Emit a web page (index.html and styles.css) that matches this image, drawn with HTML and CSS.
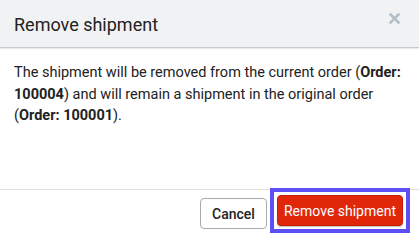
FILE: index.html
```html
<!DOCTYPE html>
<html>
<head>
<meta charset="utf-8">
<link rel="stylesheet" href="styles.css">
</head>
<body>
<div class="modal">
  <div class="modal-header">
    <div class="modal-title">Remove shipment</div>
    <svg class="close" width="11" height="11" viewBox="0 0 11 11"><path d="M1.5 1.5 L9.5 9.5 M9.5 1.5 L1.5 9.5" stroke="#b4bec7" stroke-width="2.6" stroke-linecap="square"/></svg>
  </div>
  <div class="modal-body">
    <p>The shipment will be removed from the current order (<b>Order:</b> <b>100004</b>) and will remain a shipment in the original order (<b>Order: 100001</b>).</p>
  </div>
  <div class="modal-footer">
    <button class="btn btn-cancel">Cancel</button>
    <span class="focus-ring"><button class="btn btn-danger">Remove shipment</button></span>
  </div>
</div>
</body>
</html>
```
FILE: styles.css
```css
html, body {
  margin: 0;
  padding: 0;
  background: #fff;
}
.modal {
  width: 419px;
  height: 238px;
  display: flex;
  flex-direction: column;
  font-family: Roboto, "Liberation Sans", sans-serif;
  color: #222;
  background: #fff;
}
.modal-header {
  height: 48px;
  background: #f1f2f4;
  border-bottom: 1px solid #c8cacd;
  box-shadow: 0 1px 1px rgba(0,0,0,0.08);
  display: flex;
  align-items: center;
  justify-content: space-between;
  padding: 0 19px 0 14px;
  box-sizing: border-box;
  flex: none;
}
.modal-title {
  font-size: 18px;
  color: #222;
  padding-top: 1px;
}
.close {
  display: block;
  margin-top: -10px;
}
.modal-body {
  flex: 1;
  padding: 14px 14px 0 14px;
}
.modal-body p {
  margin: 0;
  font-size: 14.5px;
  line-height: 21.5px;
}
.modal-body b {
  font-weight: 700;
}
.modal-footer {
  flex: none;
  height: 49px;
  box-sizing: border-box;
  border-top: 1px solid #dedfe1;
  display: flex;
  justify-content: flex-end;
  align-items: flex-start;
  gap: 3px;
  padding: 0 9px 0 0;
}
.focus-ring {
  display: block;
  border: 4px solid #5c4ff5;
  padding: 3px;
  margin-top: -2px;
  line-height: 0;
}
.btn {
  font-family: Roboto, "Liberation Sans", sans-serif;
  font-size: 14px;
  height: 31px;
  padding: 0;
  white-space: nowrap;
  border-radius: 4px;
  box-sizing: border-box;
  cursor: pointer;
}
.btn-cancel {
  width: 67px;
  margin-top: 8px;
  background: #fff;
  border: 1px solid #a9a9a9;
  color: #222;
  font-weight: 500;
}
.btn-danger {
  width: 126px;
  background: #e0270a;
  border: 1px solid #c82007;
  color: #fff;
  box-shadow: 0 1px 1px rgba(0,0,0,0.25);
}
```
